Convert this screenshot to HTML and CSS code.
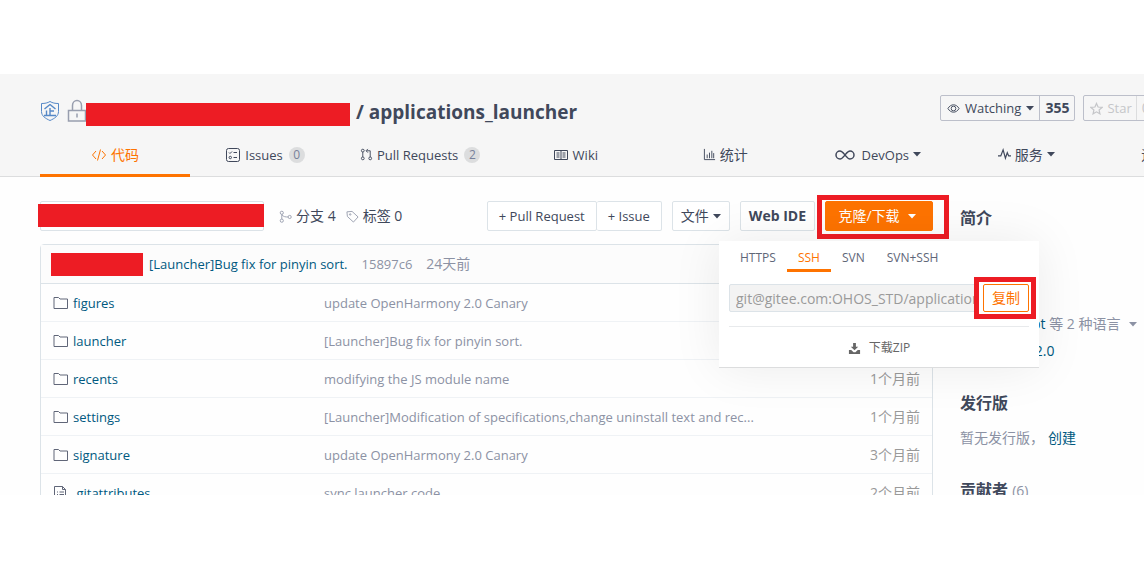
FILE: index.html
```html
<!DOCTYPE html>
<html lang="zh-CN">
<head>
<meta charset="utf-8">
<title>applications_launcher</title>
<link rel="stylesheet" href="styles.css">
</head>
<body>
<svg class="symbols" aria-hidden="true">
  <symbol id="folder" viewBox="0 0 16 14"><path d="M1 12.500V1.500h4.500l1.500 1.500h7.500v9.500z"/></symbol>
  <symbol id="caret" viewBox="0 0 8 5"><path d="M0 0h8L4 4.500z" fill="currentColor" stroke="none"/></symbol>
</svg>
<div class="screen">
  <header class="header">
    <div class="title-row">
      <svg class="shield" viewBox="0 0 20 22"><path d="M10 1.500c2.500 1.500 5 2 8.500 2v8c0 4.500-4 7-8.500 9-4.500-2-8.500-4.500-8.500-9v-8c3.500 0 6-.5 8.500-2z"/><path stroke-width="1.400" d="M10 4.500L4.500 9M10 4.500L15.500 9M10 8v7.500M10 11h4M6.500 10.500v5M4 15.500h12"/></svg>
      <svg class="lock" viewBox="0 0 20 24"><path d="M1.500 11.500h17v10.500h-17zM5.500 11.500V6.500a4.500 5 0 0 1 9 0v5M10 14.500v4"/></svg>
      <span class="mask mask-owner"></span>
      <h1 class="repo">/ applications_launcher</h1>
      <div class="social">
        <div class="pill">
          <button class="pill-main"><svg class="i13" viewBox="0 0 14 12"><path d="M1 6c3-5.300 9-5.300 12 0-3 5.300-9 5.300-12 0z"/><circle cx="7" cy="6" r="2.500"/></svg>Watching<svg class="caret"><use href="#caret"/></svg></button>
          <a class="pill-count" href="#">355</a>
        </div>
        <div class="pill muted">
          <button class="pill-main"><svg class="i13" viewBox="0 0 14 13"><path stroke-width="1.300" d="M7 1l1.700 3.900 4.300.4-3.200 2.800.9 4.200L7 10.100l-3.700 2.200.9-4.200L1 5.300l4.300-.4z"/></svg>Star</button>
          <a class="pill-count" href="#">0</a>
        </div>
      </div>
    </div>
    <nav class="tabs">
      <a class="tab zh active" href="#"><svg class="i16" viewBox="0 0 16 14"><path d="M5 3L1.500 7 5 11M11 3l3.500 4L11 11M9.500 1.500l-3 11"/></svg>代码</a>
      <a class="tab" href="#"><svg class="i16" viewBox="0 0 16 16"><rect x="1.500" y="1.500" width="13" height="13" rx="2"/><path d="M4 5.500l1 1 2-2M8.500 5.500H12M8.500 10.500H12"/><circle cx="5.300" cy="10.500" r="1.200"/></svg>Issues<span class="badge">0</span></a>
      <a class="tab" href="#"><svg class="i13" viewBox="0 0 14 14"><circle cx="3" cy="2.800" r="1.500"/><circle cx="3" cy="11.200" r="1.500"/><circle cx="11" cy="11.200" r="1.500"/><path d="M3 4.300v5.400M11 9.700V3H7M8.500 1L6.500 3l2 2"/></svg>Pull Requests<span class="badge">2</span></a>
      <a class="tab" href="#"><svg class="i16" viewBox="0 0 16 14"><path d="M1.500 2.500h13v9h-13zM8 2.500v9M3.500 5h3M3.500 7h3M3.500 9h3M9.500 5h3M9.500 7h3M9.500 9h3"/></svg>Wiki</a>
      <a class="tab zh" href="#"><svg class="i13" viewBox="0 0 14 14"><path d="M1.500 1v11.500H13M4.500 11V7M7 11V5M9.500 11V3M11.500 11V5.500"/></svg>统计</a>
      <a class="tab devops" href="#"><svg class="infinity" viewBox="0 0 20 12"><path stroke-width="1.500" d="M10 6C8 3.500 7 2 5 2a4 4 0 0 0 0 8c2 0 3-1.500 5-4s3-4 5-4a4 4 0 0 1 0 8c-2 0-3-1.500-5-4z"/></svg>DevOps<svg class="caret"><use href="#caret"/></svg></a>
      <a class="tab zh service" href="#"><svg class="i13" viewBox="0 0 14 14"><path stroke-width="1.300" d="M0 8.500h3L5.500 2l2.500 9 2-6 1.500 3.500H14"/></svg>服务<svg class="caret"><use href="#caret"/></svg></a>
      <a class="tab zh more" href="#">运维</a>
    </nav>
  </header>
  <div class="content">
    <main class="main">
      <div class="toolbar">
        <button class="btn branch" aria-label="分支"><span class="mask mask-branch"></span></button>
        <a class="stat" href="#"><svg class="i13" viewBox="0 0 14 14"><circle cx="3" cy="3" r="1.700"/><circle cx="3" cy="11.500" r="1.700"/><circle cx="11.500" cy="7.500" r="1.700"/><path d="M3 4.700v5M3 5c2 2.500 4 2.500 6.700 2.500"/></svg>分支 4</a>
        <a class="stat" href="#"><svg class="i13" viewBox="0 0 14 14"><path d="M1 2l5.500-.5 6.500 6L8 13 1.500 7z"/><circle cx="4.500" cy="4.800" r=".8"/></svg>标签 0</a>
        <div class="actions">
          <div class="group"><button class="btn">+ Pull Request</button><button class="btn">+ Issue</button></div>
          <button class="btn">文件<svg class="caret"><use href="#caret"/></svg></button>
          <button class="btn ide">Web IDE</button>
          <div class="clone">
            <button class="btn primary">克隆/下载<svg class="caret"><use href="#caret"/></svg></button>
            <span class="frame"></span>
            <div class="popup">
              <div class="protocols"><button class="proto">HTTPS</button><button class="proto on">SSH</button><button class="proto">SVN</button><button class="proto">SVN+SSH</button></div>
              <div class="address">
                <input class="url" aria-label="SSH" readonly value="git@gitee.com:OHOS_STD/applications_launcher.git">
                <div class="copy-wrap"><button class="copy">复制</button><span class="frame"></span></div>
              </div>
              <a class="zip" href="#"><svg class="i13" viewBox="0 0 14 14"><path fill="currentColor" stroke="none" d="M5.500 1h3v4H11L7 9 3 5h2.500zM1 8.500h2.500L6 11h2l2.500-2.500H13V13H1z"/></svg>下载ZIP</a>
            </div>
          </div>
        </div>
      </div>
      <section class="files">
        <div class="commit"><span class="mask mask-author"></span><a class="link" href="#">[Launcher]Bug fix for pinyin sort.</a><span>15897c6</span><span class="when">24天前</span></div>
        <table class="list">
          <tr><td class="name"><a class="link" href="#"><svg class="i16"><use href="#folder"/></svg>figures</a></td><td>update OpenHarmony 2.0 Canary</td><td class="age">1个月前</td></tr>
          <tr><td class="name"><a class="link" href="#"><svg class="i16"><use href="#folder"/></svg>launcher</a></td><td>[Launcher]Bug fix for pinyin sort.</td><td class="age">24天前</td></tr>
          <tr><td class="name"><a class="link" href="#"><svg class="i16"><use href="#folder"/></svg>recents</a></td><td>modifying the JS module name</td><td class="age">1个月前</td></tr>
          <tr><td class="name"><a class="link" href="#"><svg class="i16"><use href="#folder"/></svg>settings</a></td><td>[Launcher]Modification of specifications,change uninstall text and rec...</td><td class="age">1个月前</td></tr>
          <tr><td class="name"><a class="link" href="#"><svg class="i16"><use href="#folder"/></svg>signature</a></td><td>update OpenHarmony 2.0 Canary</td><td class="age">3个月前</td></tr>
          <tr><td class="name"><a class="link" href="#"><svg class="i16" viewBox="0 0 16 16"><path d="M1.500 1.500h8l3 3v10h-11zM9.500 1.500v3h3M4 7h1M6.500 7H11M4 9.500h1M6.500 9.500H11M4 12h1M6.500 12H11"/></svg>.gitattributes</a></td><td>sync launcher code</td><td class="age">2个月前</td></tr>
        </table>
      </section>
    </main>
    <aside class="side">
      <h2 class="side-title">简介</h2>
      <div class="about">
        <p class="about-line"><svg class="i13" viewBox="0 0 14 14"><circle cx="7" cy="7" r="5"/></svg><span><a class="link" href="#">JavaScript</a> 等 2 种语言</span><svg class="caret"><use href="#caret"/></svg></p>
        <p class="about-line"><svg class="i13" viewBox="0 0 14 14"><path d="M2 1.500h10v11H2zM4 5h6M4 8h6"/></svg><a class="link" href="#">Apache-2.0</a></p>
      </div>
      <h2 class="side-title">发行版</h2>
      <p class="release">暂无发行版，<a class="link" href="#">创建</a></p>
      <h2 class="side-title">贡献者 <small class="total">(6)</small></h2>
    </aside>
  </div>
</div>
</body>
</html>
```
FILE: styles.css
```css
* { box-sizing: border-box; }
body {
  margin: 0;
  height: 100vh;
  padding: 74px 0 73px;
  background: #fff;
  color: #40485b;
  font: 14px/20px "Open Sans", "Noto Sans CJK SC", sans-serif;
}
h1, h2, p { margin: 0; }
a { color: inherit; text-decoration: none; }
button { font: inherit; color: inherit; background: none; border: 0; padding: 0; margin: 0; }
svg { fill: none; stroke: currentColor; stroke-width: 1; flex: none; }
.symbols { display: none; }
.screen { height: 100%; overflow: hidden; background: #fefefe; }
.i13 { width: 13px; height: 13px; }
.i16 { width: 16px; height: 16px; }
.caret { width: 8px; height: 5px; }
.mask { display: block; flex: none; background: #ed1c24; }

.header { background: #f6f6f6; border-bottom: 1px solid #dcddde; padding-left: 40px; }
.title-row { display: flex; align-items: center; height: 60px; padding-top: 16px; }
.shield { width: 20px; height: 22px; margin-bottom: 2px; color: #5588c7; }
.lock { width: 20px; height: 24px; margin: 0 -1px 2px 7px; color: #989eae; stroke-width: 1.5; }
.mask-owner { width: 264px; height: 23px; margin-top: 4px; }
.repo { flex: 1; margin-left: 6px; font-size: 19px; line-height: 24px; font-weight: 700; white-space: nowrap; }
.social { display: flex; flex: none; gap: 8px; width: 204px; margin-top: -8px; }
.pill { display: flex; flex: none; height: 26px; border: 1px solid #bcbfca; border-radius: 2px; }
.pill-main { display: flex; align-items: center; gap: 5px; padding: 0 5px 0 6px; font-size: 13px; }
.pill-count { padding: 2px 5px; border-left: 1px solid #bcbfca; font-weight: 700; }
.muted .pill-main { padding-right: 4px; gap: 4px; }
.muted .pill-main, .muted .pill-count { color: #c5c6c9; }
.muted .pill-count { border-color: #dcddde; font-weight: 400; }

.tabs { display: flex; height: 43px; margin-bottom: -1px; }
.tab { display: flex; flex: none; align-items: center; justify-content: center; gap: 4px; min-width: 150px; padding: 1px 20px 0; border-bottom: 3px solid transparent; font-size: 13px; }
.tab.zh { font-size: 14px; }
.tab.active { color: #fe7300; border-color: #fe7300; }
.tab.devops { min-width: 155px; }
.tab.service { min-width: 142px; }
.tab.more { min-width: 116px; }
.badge { margin-left: 2px; min-width: 16px; height: 16px; padding: 0 4px; border-radius: 8px; background: #dcddde; color: #78819a; font-size: 12px; line-height: 16px; text-align: center; }
.infinity { width: 20px; height: 12px; margin-right: 3px; }

.content { display: flex; gap: 27px; padding: 24px 0 0 40px; }
.main { flex: 1; min-width: 0; }
.toolbar { display: flex; align-items: center; gap: 10px; height: 30px; white-space: nowrap; }
.btn { display: flex; align-items: center; gap: 4px; height: 30px; padding: 0 8px; border: 1px solid #dce3e8; border-radius: 2px; background: #fff; }
.branch { width: 224px; padding: 0; margin-right: 5px; }
.mask-branch { width: 226px; height: 23px; margin: 0 0 2px -3px; }
.stat { display: flex; align-items: center; gap: 4px; }
.stat svg { color: #989eae; }
.actions { display: flex; gap: 10px; margin-left: auto; }
.group { display: flex; }
.group .btn { padding: 0 11px; font-size: 13px; }
.group .btn + .btn { border-left: 0; }
.ide { font-weight: 700; }
.clone { position: relative; }
.primary { width: 108px; padding: 0 16px 0 12px; justify-content: center; gap: 8px; background: #fe7300; border-color: #fe7300; color: #fff; }
.clone > .frame { position: absolute; inset: -6px -16px -8px -8px; border: 5px solid #ed1c24; }
.popup { position: absolute; z-index: 1; top: 40px; right: -106px; width: 320px; padding: 6px 10px 0; background: #fff; border-bottom: 1px solid #dcddde; box-shadow: 0 0 50px rgba(0, 0, 0, .08); }
.protocols { display: flex; }
.proto { height: 25px; padding: 0 11px; border-bottom: 3px solid transparent; font-size: 12px; line-height: 20px; color: #606678; }
.proto.on { color: #fe7300; border-color: #fe7300; }
.address { display: flex; margin-top: 12px; padding-bottom: 14px; border-bottom: 1px solid #e8eaec; }
.url { flex: 1; min-width: 0; height: 28px; padding: 0 0 0 6px; border: 1px solid #dce3e8; border-radius: 2px; background: #f3f3f3; color: #9a9a9a; font: inherit; }
.copy-wrap { position: relative; margin-left: 4px; }
.copy { width: 46px; height: 28px; border: 1px solid #fe7300; border-radius: 2px; color: #fe7300; background: #fff; }
.copy-wrap .frame { position: absolute; inset: -7px -7px -7px -9px; border: 5px solid #ed1c24; box-shadow: inset 0 0 0 2px #fff; pointer-events: none; }
.zip { display: flex; align-items: center; justify-content: center; gap: 8px; height: 40px; padding-top: 2px; font-size: 12px; color: #666; }

.files { margin-top: 13px; border: 1px solid #dce3e8; border-radius: 4px 4px 0 0; color: #8c92a4; font-size: 13px; }
.commit { display: flex; align-items: center; gap: 14px; height: 39px; padding-left: 10px; background: #fcfcfc; border-bottom: 1px solid #dce3e8; }
.mask-author { width: 92px; height: 23px; margin-right: -8px; }
.when { font-size: 14px; }
.link { color: #005980; }
.list { width: 100%; border-spacing: 0; table-layout: fixed; }
.list td { height: 38px; padding: 0; border-bottom: 1px solid #eff2f5; white-space: nowrap; }
.list .name { width: 283px; padding-left: 12px; }
.name .link { display: flex; align-items: center; gap: 4px; }
.name svg { color: #606678; }
.list .age { width: 100px; padding-right: 12px; text-align: right; font-size: 14px; color: #999; }

.side { width: 184px; flex: none; white-space: nowrap; }
.side-title { font-size: 16px; line-height: 24px; font-weight: 600; padding-top: 5px; }
.about { display: grid; gap: 7px; margin: 84px 0 25px; color: #8c92a4; }
.about-line { display: flex; align-items: center; gap: 9px; line-height: 20px; }
.release { margin: 13px 0 25px; color: #8c92a4; }
.release .link { margin-left: 4px; }
.total { font-size: 14px; font-weight: 400; color: #8c92a4; }
```
